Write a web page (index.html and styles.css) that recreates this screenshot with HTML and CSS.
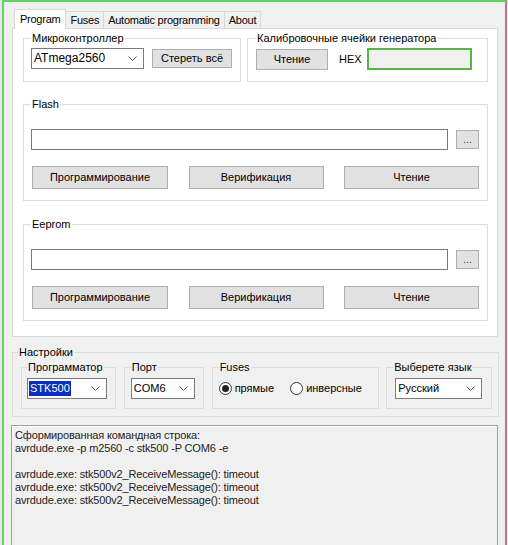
FILE: index.html
```html
<!DOCTYPE html>
<html lang="ru">
<head>
    <meta charset="UTF-8">
    <title>AVRDUDE_PROG</title>
    <link rel="stylesheet" href="styles.css">
</head>
<body>
    <div class="window">
        <div class="tabs">
            <div class="tab-strip">
                <span class="tab active">Program</span>
                <span class="tab">Fuses</span>
                <span class="tab">Automatic programming</span>
                <span class="tab">About</span>
            </div>
            <div class="tab-page">
                <div class="top-row">
                    <fieldset class="group">
                        <legend>Микроконтроллер</legend>
                        <div class="line">
                            <div class="combo combo-mcu">
                                <span>ATmega2560</span>
                                <svg width="9" height="5" viewBox="0 0 9 5"><polyline points="0.5,0.5 4.5,4.5 8.5,0.5" fill="none" stroke="#555" stroke-width="1"/></svg>
                            </div>
                            <button class="btn btn-erase">Стереть всё</button>
                        </div>
                    </fieldset>
                    <fieldset class="group group-cal">
                        <legend>Калибровочные ячейки генератора</legend>
                        <div class="line">
                            <button class="btn btn-cal">Чтение</button>
                            <span class="hex-label">HEX</span>
                            <div class="hex-box"></div>
                        </div>
                    </fieldset>
                </div>

                <fieldset class="group memory">
                    <legend>Flash</legend>
                    <div class="file-line">
                        <div class="textbox"></div>
                        <button class="btn btn-browse">...</button>
                    </div>
                    <div class="actions">
                        <button class="btn">Программирование</button>
                        <button class="btn">Верификация</button>
                        <button class="btn">Чтение</button>
                    </div>
                </fieldset>

                <fieldset class="group memory">
                    <legend>Eeprom</legend>
                    <div class="file-line">
                        <div class="textbox"></div>
                        <button class="btn btn-browse">...</button>
                    </div>
                    <div class="actions">
                        <button class="btn">Программирование</button>
                        <button class="btn">Верификация</button>
                        <button class="btn">Чтение</button>
                    </div>
                </fieldset>
            </div>
        </div>

        <fieldset class="settings">
            <legend>Настройки</legend>
            <div class="settings-row">
                <fieldset class="sub sub-prog">
                    <legend>Программатор</legend>
                    <div class="combo combo-prog">
                        <span class="selected">STK500</span>
                        <svg width="9" height="5" viewBox="0 0 9 5"><polyline points="0.5,0.5 4.5,4.5 8.5,0.5" fill="none" stroke="#555" stroke-width="1"/></svg>
                    </div>
                </fieldset>
                <fieldset class="sub sub-port">
                    <legend>Порт</legend>
                    <div class="combo combo-port">
                        <span>COM6</span>
                        <svg width="9" height="5" viewBox="0 0 9 5"><polyline points="0.5,0.5 4.5,4.5 8.5,0.5" fill="none" stroke="#555" stroke-width="1"/></svg>
                    </div>
                </fieldset>
                <fieldset class="sub sub-fuses">
                    <legend>Fuses</legend>
                    <div class="radios">
                        <label class="radio-item"><span class="radio checked"></span>прямые</label>
                        <label class="radio-item"><span class="radio"></span>инверсные</label>
                    </div>
                </fieldset>
                <fieldset class="sub sub-lang">
                    <legend>Выберете язык</legend>
                    <div class="combo combo-lang">
                        <span>Русский</span>
                        <svg width="9" height="5" viewBox="0 0 9 5"><polyline points="0.5,0.5 4.5,4.5 8.5,0.5" fill="none" stroke="#555" stroke-width="1"/></svg>
                    </div>
                </fieldset>
            </div>
        </fieldset>

        <div class="log">Сформированная командная строка:
avrdude.exe -p m2560 -c stk500 -P COM6 -e

avrdude.exe: stk500v2_ReceiveMessage(): timeout
avrdude.exe: stk500v2_ReceiveMessage(): timeout
avrdude.exe: stk500v2_ReceiveMessage(): timeout</div>
    </div>
</body>
</html>
```

FILE: styles.css
```css
* {
    box-sizing: border-box;
}
body {
    margin: 0;
    background-color: #e6e6e6;
    font-family: "Liberation Sans", Arial, sans-serif;
    font-size: 11px;
    line-height: 13px;
    color: #000;
    overflow: hidden;
}

/* окно программы */
.window {
    margin-left: 2px;
    width: 505px;
    height: 545px;
    overflow: hidden;
    background-color: #f0f0f0;
    border-top: 2px solid #5fd35f;
    border-left: 2px solid #5fd35f;
    border-right: 2px solid #b97884;
    padding-top: 7px;
}

/* вкладки */
.tabs {
    margin-left: 8px;
    width: 486px;
}
.tab-strip {
    display: flex;
    align-items: flex-end;
    height: 19px;
    padding-left: 2px;
}
.tab {
    height: 17px;
    padding: 1px 4px 0 4px;
    border: 1px solid #d9d9d9;
    border-bottom: none;
    border-left: none;
    background-color: #f0f0f0;
    line-height: 15px;
    letter-spacing: -0.25px;
}
.tab.active {
    position: relative;
    z-index: 1;
    height: 20px;
    margin-bottom: -1px;
    padding: 2px 5px 0 5px;
    border-left: 1px solid #d9d9d9;
    background-color: #fff;
}
.tab-page {
    background-color: #fff;
    border: 1px solid #d9d9d9;
    padding: 3px 9px 15px 10px;
}

/* рамки групп */
fieldset {
    margin: 0;
    min-width: 0;
}
legend {
    padding: 0 1px;
    line-height: 13px;
}
.group {
    border: 1px solid #dcdcdc;
    padding: 3px 8px 11px 7px;
}
.top-row {
    display: grid;
    grid-template-columns: 218px 241px;
    column-gap: 6px;
}
.group-cal {
    padding-left: 8px;
}
.line {
    display: flex;
    align-items: center;
}
.memory {
    margin-top: 16px;
    padding-top: 18px;
}
.memory + .memory {
    margin-top: 17px;
}

/* элементы управления */
.btn {
    font: inherit;
    line-height: 13px;
    color: #000;
    background-color: #e1e1e1;
    border: 1px solid #adadad;
    padding: 0;
    margin: 0;
}
.btn-erase {
    margin-left: 8px;
    width: 80px;
    height: 19px;
}
.btn-cal {
    width: 72px;
    height: 21px;
}
.hex-label {
    margin-left: 11px;
    width: 28px;
}
.hex-box {
    width: 105px;
    height: 22px;
    border: 2px solid #5cb34c;
    background-color: #f0f0f0;
}
.textbox {
    height: 21px;
    border: 1px solid #7a7a7a;
    background-color: #fff;
    flex: 1;
}
.file-line {
    display: flex;
    align-items: center;
    column-gap: 8px;
}
.btn-browse {
    width: 23px;
    height: 19px;
    color: #444;
}
.actions {
    display: grid;
    grid-template-columns: 136px 135px 135px;
    justify-content: space-between;
    margin-top: 16px;
    padding-left: 1px;
}
.actions .btn {
    height: 23px;
}
.combo {
    display: flex;
    align-items: center;
    justify-content: space-between;
    height: 21px;
    border: 1px solid #7a7a7a;
    background-color: #fff;
    padding: 0 6px 0 2px;
}
.combo-mcu {
    width: 113px;
    font-size: 12px;
}
.combo-prog {
    width: 80px;
    padding-left: 1px;
}
.combo-port {
    width: 64px;
}
.combo-lang {
    width: 87px;
}
.selected {
    background-color: #0a2fbf;
    color: #fff;
    padding: 1px 1px;
}

/* настройки */
.settings {
    margin: 9px 0 0 8px;
    width: 487px;
    border: 1px solid #dcdcdc;
    padding: 2px 6px 7px 8px;
}
.settings > legend {
    margin-left: -3px;
}
.settings-row {
    display: flex;
}
.sub {
    border: 1px solid #dcdcdc;
    padding: 4px 6px 9px 6px;
}
.sub-prog {
    width: 95px;
    padding-left: 5px;
}
.sub-port {
    width: 80px;
    margin-left: 8px;
}
.sub-fuses {
    width: 168px;
    margin-left: 8px;
}
.sub-lang {
    width: 106px;
    margin-left: 7px;
    padding-left: 8px;
}
.sub-lang > legend {
    margin-left: -2px;
}
.radios {
    display: flex;
    align-items: center;
    height: 21px;
}
.radio-item {
    display: flex;
    align-items: center;
    column-gap: 3px;
}
.radio-item + .radio-item {
    margin-left: 16px;
}
.radio {
    width: 13px;
    height: 13px;
    border: 1px solid #333;
    border-radius: 50%;
    background-color: #fff;
    display: flex;
    align-items: center;
    justify-content: center;
}
.radio.checked::after {
    content: "";
    width: 7px;
    height: 7px;
    border-radius: 50%;
    background-color: #222;
}

/* окно вывода */
.log {
    margin: 8px 0 0 7px;
    width: 487px;
    height: 140px;
    border: 1px solid #a0a0a0;
    box-shadow: inset 0 1px 0 #fff;
    padding: 3px 3px;
    white-space: pre;
    color: #222;
    letter-spacing: -0.15px;
}
```
